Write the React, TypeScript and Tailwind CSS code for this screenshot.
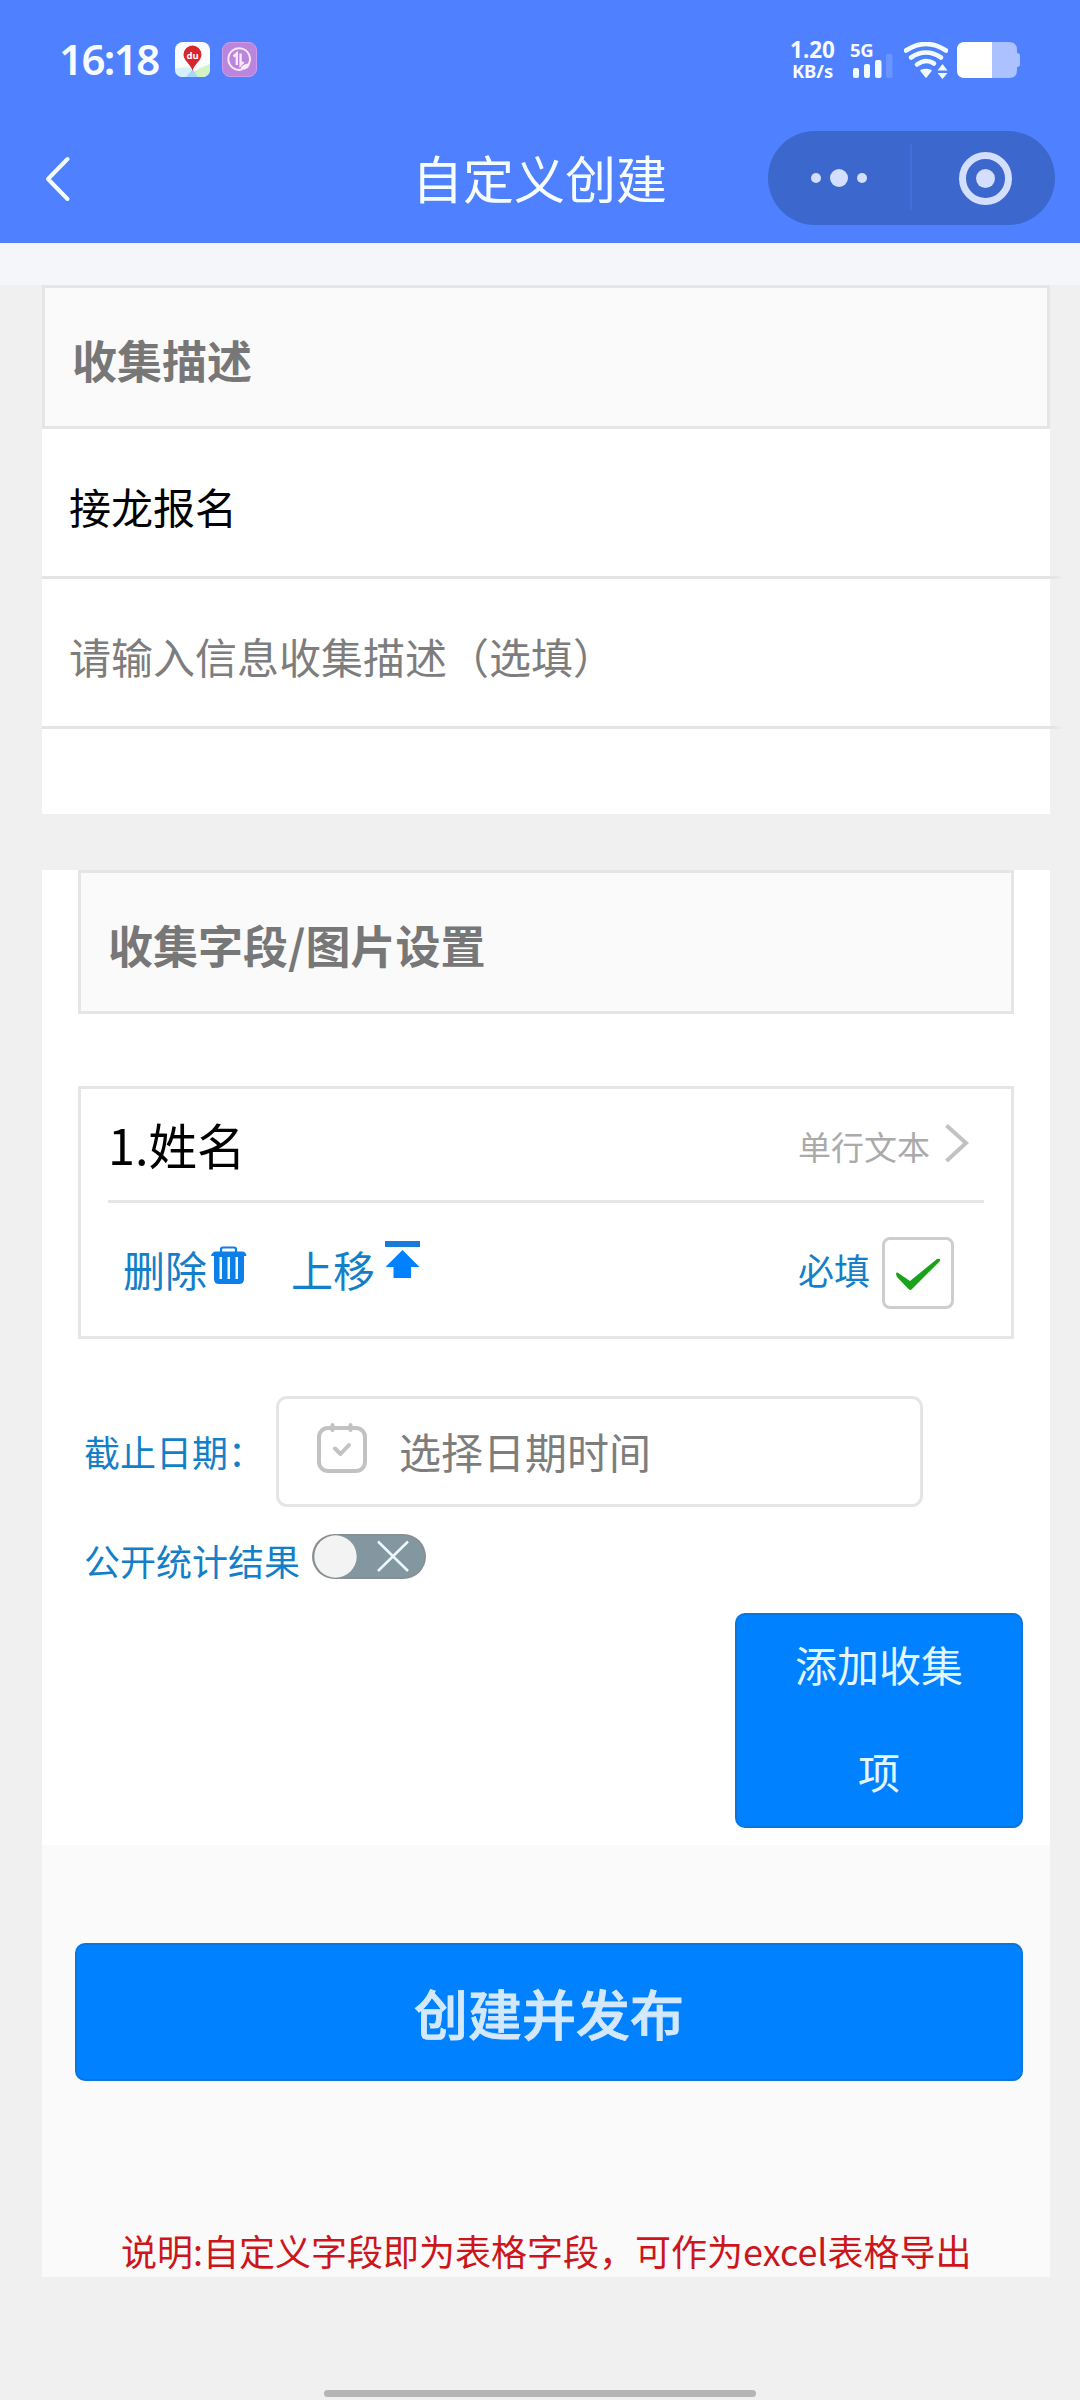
import React from "react";

function MapAppIcon() {
  return (
    <svg className="ml-4 h-[35px] w-[35px]" viewBox="0 0 35 35">
      <rect width="35" height="35" rx="8" fill="#fbfefe" />
      <path d="M0 27Q8 24 17.500 26L12 35H8Q0 35 0 27Z" fill="#d4f0fb" />
      <path d="M35 22Q26 25 18 30L22 35H27Q35 35 35 27Z" fill="#d3f3c4" />
      <path d="M17.500 27L23 35H11Z" fill="#a9d6fb" />
      <path d="M17.500 29C16 22 8.500 19 8.500 12.500a9 9 0 0 1 18 0C26.500 19 19 22 17.500 29Z" fill="#d8262f" />
      <text x="17.500" y="17" textAnchor="middle" fontSize="9.500" fontWeight="700" fill="#fff" fontFamily="Noto Sans, sans-serif">du</text>
    </svg>
  );
}

function TrafficAppIcon() {
  return (
    <svg className="ml-3 h-[35px] w-[35px]" viewBox="0 0 35 35" fill="none">
      <rect x=".5" y=".5" width="34" height="34" rx="7.500" fill="#ba85dc" stroke="#cf9be8" />
      <path d="M26.500 22.500A10.800 10.800 0 1 0 20 27.500" stroke="#fbe8fb" strokeWidth="2" />
      <path d="M11.500 14.500L14.800 11.500V23M18.600 11.500V23L21.500 20" stroke="#fbe8fb" strokeWidth="2.400" />
      <path d="M18.500 28Q18.500 22 27.500 21.500Q28 28 18.500 28Z" fill="#fbe8fb" />
    </svg>
  );
}

function SignalIcon() {
  return (
    <svg className="ml-px h-[25px] w-[42px]" viewBox="0 0 42 25">
      <rect x="2" y="15" width="6" height="10" rx="2" fill="#f1fcff" />
      <rect x="13" y="11" width="6" height="14" rx="2" fill="#f1fcff" />
      <rect x="24" y="7" width="6.500" height="18" rx="2" fill="#f1fcff" />
      <rect x="35" y="1" width="6.500" height="24" rx="2" fill="#6a94ff" />
    </svg>
  );
}

function WifiIcon() {
  return (
    <svg className="ml-[12px] mt-[42px] h-[37px] w-[44px]" viewBox="0 0 44 37" fill="none" stroke="#f1fcff" strokeLinecap="round">
      <path d="M2 8.500Q22 -4.500 42 8.500" strokeWidth="4.600" />
      <path d="M7 15.500Q22 5.500 37 15.500" strokeWidth="4.600" />
      <path d="M13 22.500Q22 16 30 21.500" strokeWidth="4.600" />
      <path d="M17 28.500Q22 26.500 27 28.500L22 35Z" fill="#f1fcff" strokeWidth="1.500" strokeLinejoin="round" />
      <path d="M33.500 28.500L38.500 22L43.500 28.500ZM33.500 31H43.500L38.500 37Z" fill="#f1fcff" stroke="none" />
    </svg>
  );
}

function BatteryIcon() {
  return (
    <svg className="ml-[9px] mt-[42px] h-9 w-[63px]" viewBox="0 0 63 36">
      <path d="M8 0H52Q60 0 60 8V11Q63 11 63 14V22Q63 25 60 25V28Q60 36 52 36H8Q0 36 0 28V8Q0 0 8 0Z" fill="#acc1ff" />
      <path d="M8 0H35V36H8Q0 36 0 28V8Q0 0 8 0Z" fill="#fff" />
    </svg>
  );
}

function StatusBar() {
  return (
    <div className="flex h-[120px] items-start text-[#f8fcff]">
      <div className="ml-[59px] mt-[37px] w-[100px] whitespace-nowrap font-['Noto_Sans'] text-[42px] font-semibold leading-[44px] tracking-[-1.6px]">16:18</div>
      <div className="mt-[42px] flex">
        <MapAppIcon />
        <TrafficAppIcon />
      </div>
      <div className="ml-[530px] mt-[40px] w-[51px] whitespace-nowrap text-center font-['Noto_Sans'] font-bold">
        <div className="text-[22.500px] leading-[20px]">1.20</div>
        <div className="text-[18.500px] leading-[21px] tracking-[-0.1px]">KB/s</div>
      </div>
      <div className="ml-[12px] mt-[41px] w-[42px]">
        <div className="h-[12px] font-['Noto_Sans'] text-[18.500px] font-bold leading-[17px] tracking-[-0.4px]">5G</div>
        <SignalIcon />
      </div>
      <WifiIcon />
      <BatteryIcon />
    </div>
  );
}

function NavBar() {
  return (
    <div className="relative flex h-[123px] items-start">
      <svg className="ml-[45px] mt-[36px] h-[46px] w-[26px]" viewBox="0 0 26 46" fill="none" stroke="#f3fcff" strokeWidth="4" strokeLinecap="round" strokeLinejoin="round">
        <path d="M22.500 3L3 23L22.500 43" />
      </svg>
      <h1 className="ml-[341px] mt-[27px] w-[259px] whitespace-nowrap text-[51px] font-normal leading-[60px] text-[#f6fdff]">自定义创建</h1>
      <svg className="ml-[97px] mt-[11px] h-[94px] w-[287px]" viewBox="0 0 287 94">
        <rect width="287" height="94" rx="47" fill="#3c67cc" />
        <rect x="142" y="13" width="2" height="66" fill="#426fda" />
        <g fill="#d3dffc">
          <circle cx="48" cy="47" r="5" />
          <circle cx="71" cy="47" r="9" />
          <circle cx="94" cy="47" r="5" />
          <circle cx="217.500" cy="47.500" r="9.500" />
        </g>
        <circle cx="217.500" cy="47.500" r="23" fill="none" stroke="#d3dffc" strokeWidth="7" />
      </svg>
    </div>
  );
}

function SectionTitle({ children }: { children: React.ReactNode }) {
  return (
    <h2 className="flex h-[144px] items-center border-[3px] border-[#e4e5e6] bg-[#fafafa] pl-[27px] text-[45px] font-bold leading-none text-[#777]">
      <span className="-mb-[5px]">{children}</span>
    </h2>
  );
}

function TrashIcon() {
  return (
    <svg className="ml-[4px] mt-[43px] h-[38px] w-[36px]" viewBox="0 0 36 38">
      <path d="M10 6V3Q10 1.500 12 1.500H23Q25 1.500 25 3V6" fill="none" stroke="#0d7fe9" strokeWidth="2.200" />
      <path d="M0 10Q1 5.500 5 5.500H31Q35 5.500 35.500 10H33V33Q33 38 28 38H8Q3 38 3 33V10Z" fill="#0d7fe9" />
      <path d="M8.500 11H11V33H8.500ZM16.500 11H19V33H16.500ZM24.500 11H27V33H24.500Z" fill="#f0faff" />
    </svg>
  );
}

function MoveUpIcon() {
  return (
    <svg className="ml-[10px] mt-[38px] h-[38px] w-[35px]" viewBox="0 0 35 38">
      <rect width="35" height="6" fill="#167bdb" />
      <path d="M17.500 9L34.500 26H26V37H8.500V26H.5Z" fill="#0081ff" />
    </svg>
  );
}

function FieldItem() {
  return (
    <div className="mt-[72px] h-[253px] border-[3px] border-[#e6e6e6] px-[27px]">
      <div className="flex h-[114px] border-b-[3px] border-[#e6e6e6]">
        <span className="mt-[25px] text-[48.500px] leading-[60px] text-black">1.姓名</span>
        <span className="ml-auto mt-[31px] text-[33px] leading-[52px] text-[#aaa]">单行文本</span>
        <svg className="ml-[14px] mr-[14px] mt-[34px] h-[40px] w-[26px]" viewBox="0 0 26 40" fill="none" stroke="#c2c2c2" strokeWidth="4">
          <path d="M2.500 2.500L22 20L2.500 38" />
        </svg>
      </div>
      <div className="flex h-[133px] pl-[15px] text-[#147fc9]">
        <span className="mt-[40px] text-[42px] leading-[52px]">删除</span>
        <TrashIcon />
        <span className="ml-[44px] mt-[40px] text-[42px] leading-[52px]">上移</span>
        <MoveUpIcon />
        <span className="ml-auto mt-[40px] text-[36px] leading-[52px]">必填</span>
        <span className="ml-[12px] mr-[30px] mt-[34px] flex h-[72px] w-[72px] items-center justify-center rounded-[8px] border-[3px] border-[#cecece] bg-white">
          <svg className="mt-[2px] h-[32px] w-[46px]" viewBox="0 0 46 32">
            <path d="M2.500 14.500L15 23L42 1Q46 0 45 3L17 31Q15.500 33 13.500 31L2 19Q0 14 2.500 14.500Z" fill="#1ba21b" />
          </svg>
        </span>
      </div>
    </div>
  );
}

function CalendarIcon() {
  return (
    <svg className="ml-[38px] h-[50px] w-[50px]" viewBox="0 0 50 50" fill="none" stroke="#c2c2c2" strokeWidth="4" strokeLinecap="round">
      <rect x="2" y="5" width="46" height="43" rx="9" />
      <path d="M15.500 2V7M33.500 2V7" />
      <path d="M18 25.500L23.500 31L32 22" strokeLinejoin="round" />
    </svg>
  );
}

function DeadlineRow() {
  return (
    <div className="ml-[6px] mt-[57px] flex h-[111px] items-center">
      <span className="mb-[2px] w-[192px] whitespace-nowrap text-[36px] leading-[52px] text-[#147fc9]">截止日期：</span>
      <div className="flex h-[111px] w-[647px] items-center rounded-[11px] border-[3px] border-[#e5e5e5] bg-white">
        <div className="mb-[8px]">
          <CalendarIcon />
        </div>
        <span className="mb-[2px] ml-8 text-[42px] leading-[52px] text-[#7d7d7d]">选择日期时间</span>
      </div>
    </div>
  );
}

function PublicResultRow() {
  return (
    <div className="ml-[6px] mt-[27px] flex">
      <span className="text-[36px] leading-[52px] text-[#147fc9]">公开统计结果</span>
      <svg className="ml-[12px] h-[45px] w-[114px]" viewBox="0 0 114 45">
        <rect width="114" height="45" rx="22.500" fill="#888f92" />
        <rect x="2" y="2" width="110.500" height="41" rx="20.500" fill="#8297a0" />
        <circle cx="23.500" cy="22.500" r="21.200" fill="#f3f3f3" />
        <path d="M66 7.500L96 37M96 7.500L66 37" stroke="#eef8ff" strokeWidth="2.500" />
      </svg>
    </div>
  );
}

export default function App() {
  return (
    <div className="flex h-[2400px] w-[1080px] flex-col overflow-hidden bg-[#f0f0f0] font-['Noto_Sans_CJK_SC',sans-serif]">
      <header className="h-[243px] shrink-0 bg-[#4f80ff]">
        <StatusBar />
        <NavBar />
      </header>
      <div className="h-[42px] shrink-0 bg-[#f5f6f9]" />

      <section className="ml-[42px] h-[529px] w-[1008px] shrink-0 bg-white">
        <SectionTitle>收集描述</SectionTitle>
        <div className="flex h-[150px] w-[1021px] items-center border-b-[3px] pl-[27px] text-[42px] text-black [border-image:linear-gradient(to_right,#e4e4e4_99%,#f0f0f0)_1] [background:linear-gradient(to_right,white_1008px,#f0f0f0_1008px)]">
          <span className="mt-[6px] leading-[60px]">接龙报名</span>
        </div>
        <div className="flex h-[150px] w-[1021px] items-center border-b-[3px] pl-[27px] text-[42px] text-[#7d7d7d] [border-image:linear-gradient(to_right,#e4e4e4_99%,#f0f0f0)_1] [background:linear-gradient(to_right,white_1008px,#f0f0f0_1008px)]">
          <span className="mt-[6px] leading-[60px]">请输入信息收集描述（选填）</span>
        </div>
      </section>

      <section className="ml-[42px] mt-[56px] flex h-[975px] w-[1008px] shrink-0 flex-col bg-white pl-9 pr-9">
        <SectionTitle>收集字段/图片设置</SectionTitle>
        <FieldItem />
        <DeadlineRow />
        <PublicResultRow />
        <button className="-mr-[9px] mt-[27px] flex h-[215px] w-[288px] items-start self-end rounded-[10px] border-2 border-[#0a75dd] bg-[#0081ff] px-10 text-[42px] leading-[107px] text-[#e2f7ff]">
          <span className="-mt-[5px] w-full text-center">添加收集项</span>
        </button>
      </section>

      <section className="ml-[42px] h-[432px] w-[1008px] shrink-0 bg-[#fafafa] pl-[33px] pr-[27px] pt-[98px]">
        <button className="flex h-[138px] w-full items-center justify-center rounded-[10px] border-2 border-[#0a75dd] bg-[#0081ff] pt-[2px] text-[54px] font-medium leading-none text-[#d3e8fb] [-webkit-text-stroke:0.8px_#d3e8fb]">
          创建并发布
        </button>
        <p className="mt-[143px] whitespace-nowrap pl-[46px] text-[36px] leading-[52px] text-[#cc161b]">说明:自定义字段即为表格字段，可作为excel表格导出</p>
      </section>

      <div className="ml-[324px] mt-[113px] h-[7px] w-[432px] shrink-0 rounded-full bg-[#b5b5b5]" />
    </div>
  );
}
